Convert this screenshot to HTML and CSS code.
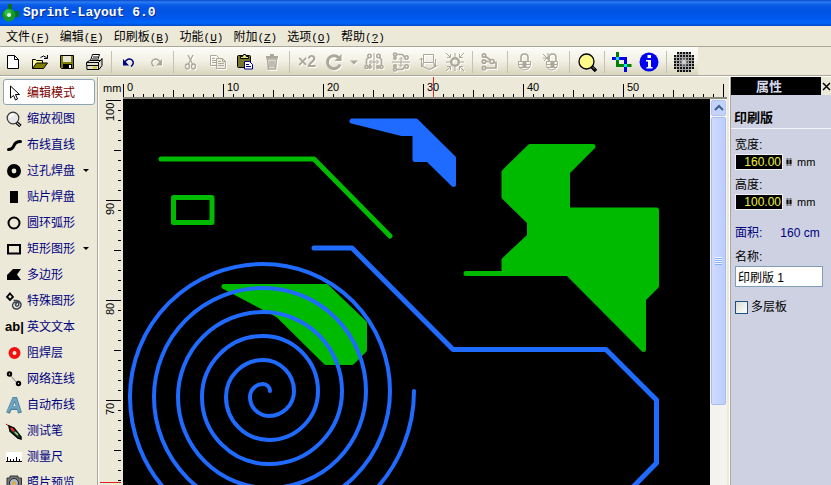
FILE: index.html
```html
<!DOCTYPE html>
<html lang="zh-CN">
<head>
<meta charset="utf-8">
<title>Sprint-Layout 6.0</title>
<link rel="stylesheet" href="styles.css">
</head>
<body>
<div class="app">
  <header class="titlebar">
    <svg class="logo" width="20" height="20" viewBox="0 0 20 20"><path d="M8 1h4v6h-4zM13 8h6v6h-6zM2 9h4v5h-4z" fill="#0a6e1c"/><circle cx="9" cy="12" r="6.5" fill="#139a2a"/><circle cx="8" cy="10" r="3.5" fill="#2fc048"/><circle cx="9" cy="12" r="2" fill="#e6f4e6"/></svg>
    <h1>Sprint-Layout 6.0</h1>
  </header>

  <nav class="menubar">
    <button>文件<span>(<u>F</u>)</span></button>
    <button>编辑<span>(<u>E</u>)</span></button>
    <button>印刷板<span>(<u>B</u>)</span></button>
    <button>功能<span>(<u>U</u>)</span></button>
    <button>附加<span>(<u>Z</u>)</span></button>
    <button>选项<span>(<u>O</u>)</span></button>
    <button>帮助<span>(<u>?</u>)</span></button>
  </nav>

  <div class="toolrow">
  <div class="toolbar" role="toolbar">
    <button aria-label="新建"><svg viewBox="0 0 20 20"><path d="M4.500 3.500h7l4 4v9h-11z" fill="#fff" stroke="#000"/><path d="M11.500 3.500v4h4" fill="none" stroke="#000"/></svg></button>
    <button aria-label="打开"><svg viewBox="0 0 20 20"><path d="M2.500 16.500v-9h3l1 1h6v3" fill="#ffff8c" stroke="#000"/><path d="M2.500 16.500l4-5.500h11l-4 5.500z" fill="#808000" stroke="#000"/><path d="M10.500 5.500q3-3 6 0M17.500 3v3.500h-3.500" fill="none" stroke="#000"/></svg></button>
    <button aria-label="保存"><svg viewBox="0 0 20 20"><path d="M3.500 3.500h13v13h-12l-1-1z" fill="#808000" stroke="#000"/><path d="M6 4h8v6h-8z" fill="#e8e6d8"/><path d="M6 12h9v4h-9z" fill="#000"/><path d="M12 13h2v3h-2z" fill="#fff"/></svg></button>
    <button aria-label="打印"><svg viewBox="0 0 20 20"><path d="M6.500 8.500l2-6h7l-2 6z" fill="#fff" stroke="#000"/><path d="M9 5h5M8 7h5" stroke="#000"/><path d="M2.500 10.500l3-2h11l1.500-2v7l-3 4h-12z" fill="#deddd0" stroke="#000"/><path d="M2.500 10.500h12v7M14.500 10.500l3-3M3 13.500h12" fill="none" stroke="#000"/><path d="M9 14.500h4v2h-4z" fill="#d0c800"/></svg></button>
    <i class="sep"></i>
    <button aria-label="撤销"><svg viewBox="0 0 20 20"><path d="M5 11q4-6 8-3 3 3-1 6.500" fill="none" stroke="#000080" stroke-width="1.500"/><path d="M4 7v6.500h6z" fill="#000080"/></svg></button>
    <button aria-label="重做" disabled><svg viewBox="0 0 20 20"><path d="M15 11q-4-6-8-3-3 3 1 6.500" fill="none" stroke="currentColor" stroke-width="1.500"/><path d="M16 7v6.500h-6z" fill="currentColor"/></svg></button>
    <i class="sep"></i>
    <button aria-label="剪切" disabled><svg viewBox="0 0 20 20" fill="none" stroke="currentColor" stroke-width="1.300"><path d="M7 3l4.500 9M12 3l-4.500 9"/><ellipse cx="6.500" cy="14.500" rx="2" ry="2.500"/><ellipse cx="12.500" cy="14.500" rx="2" ry="2.500"/></svg></button>
    <button aria-label="复制" disabled><svg viewBox="0 0 20 20" fill="none" stroke="currentColor"><path d="M2.500 3.500h6l2 2v8h-8zM4 6.500h3M4 8.500h4M4 10.500h4"/><path d="M8.500 6.500h6l3 3v7h-9z" fill="#efede0"/><path d="M10 9.500h3M10 11.500h6M10 13.500h6M14.500 6.500v3h3"/></svg></button>
    <button aria-label="粘贴"><svg viewBox="0 0 20 20"><rect x="2.500" y="3.500" width="13" height="12" rx="1" fill="#77752e" stroke="#000"/><path d="M5.500 6.500v-2h2l1-2h2l1 2h2v2z" fill="#e8e480" stroke="#000"/><path d="M9.500 9.500h5l3 3v4.500h-8z" fill="#fff" stroke="#000080"/><path d="M11 12.500h3M11 14.500h5" stroke="#000080"/></svg></button>
    <button aria-label="删除" disabled><svg viewBox="0 0 20 20"><path d="M4 4h4v-2h4v2h4v2.500h-12z" fill="currentColor"/><path d="M5.500 7h9l-1 10h-7zM8 8.500v7M10 8.500v7M12 8.500v7" fill="none" stroke="currentColor" stroke-width="1.500"/></svg></button>
    <i class="sep"></i>
    <button disabled class="dup">×2</button>
    <button aria-label="旋转" disabled><svg viewBox="0 0 20 20"><path d="M16 12.500a6.500 6.500 0 1 1-1.500-7" fill="none" stroke="currentColor" stroke-width="3"/><path d="M17.500 2v7h-7z" fill="currentColor"/></svg></button>
    <button aria-label="旋转角度" disabled class="drop"><svg viewBox="0 0 12 20"><path d="M2 8.500h8l-4 4z" fill="currentColor"/></svg></button>
    <button aria-label="水平镜像" disabled><svg viewBox="0 0 20 20" fill="none" stroke="currentColor"><path d="M10 1v17" /><path d="M6 10h8M7.500 8l-2 2 2 2M12.500 8l2 2-2 2"/><g stroke-width="1.600"><circle cx="5.500" cy="4" r="1.700"/><path d="M4.500 5.500l-2 2v6"/><circle cx="2.500" cy="15" r="1.500"/><path d="M6 12v2"/><circle cx="6" cy="15" r="1.200"/><circle cx="14.500" cy="4" r="1.700"/><path d="M15.500 5.500l2 2v6"/><circle cx="17.500" cy="15" r="1.500"/><circle cx="14" cy="15" r="1.200"/></g></svg></button>
    <button aria-label="垂直镜像" disabled><svg viewBox="0 0 20 20" fill="none" stroke="currentColor"><path d="M1 10h18M10 6v8M8 7.500l2-2 2 2M8 12.500l2 2 2-2"/><g stroke-width="1.600"><circle cx="4" cy="2.500" r="1.500"/><path d="M5.500 2.500h6l2 2.500"/><circle cx="15.500" cy="5.500" r="1.700"/><circle cx="4" cy="6" r="1.200"/><circle cx="4" cy="17.500" r="1.500"/><path d="M5.500 17.500h6l2-2.500"/><circle cx="15.500" cy="14.500" r="1.700"/><circle cx="4" cy="14" r="1.200"/></g></svg></button>
    <button aria-label="对齐" disabled><svg viewBox="0 0 20 20" fill="none" stroke="currentColor"><path d="M5.500 2.500h10v8h-10zM3.500 15V6M1.500 8l2-2 2 2M17.500 7v8M15.500 13l2 2 2-2"/><path d="M5.500 10.500l-1 4 7 3 6-3-2-4" stroke-width="1.200"/></svg></button>
    <button aria-label="吸附" disabled><svg viewBox="0 0 20 20" fill="none" stroke="currentColor"><circle cx="10" cy="10" r="3.800" stroke-width="2.400"/><path d="M1 10h4M15 10h4M10 1v4M10 15v4M1 1l4.500 4.500M5.500 2v3.500h-3.500M19 1l-4.500 4.500M14.500 2v3.500h3.500M1 19l4.500-4.500M2 14.500h3.500v3.500M19 19l-4.500-4.500M18 14.500h-3.500v3.500"/></svg></button>
    <i class="sep"></i>
    <button aria-label="连接" disabled><svg viewBox="0 0 20 20" fill="none" stroke="currentColor" stroke-width="1.700"><circle cx="4" cy="3.500" r="1.700"/><circle cx="4" cy="9.500" r="1.700"/><circle cx="4" cy="16" r="1.700"/><path d="M5.500 4.500l5 3.500M6 16h10v-5.500h-2M6 9.500h3"/><circle cx="12" cy="9.500" r="2"/></svg></button>
    <i class="sep"></i>
    <button aria-label="锁定" disabled><svg viewBox="0 0 20 20" fill="none" stroke="currentColor"><path d="M6 9V5q0-3 3.500-3t3.500 3v4" stroke-width="1.600"/><path d="M3.500 9.500h12v4q-1 4-6 4.500-5-.5-6-4.500zM3 12.500h13M4 15.500h11"/><path d="M8 10h3v5h-3z" fill="currentColor"/></svg></button>
    <button aria-label="解锁" disabled><svg viewBox="0 0 20 20" fill="none" stroke="currentColor"><path d="M7 9V6q0-4 3.500-4t3.500 3v4" stroke-width="1.600"/><path d="M4.500 9.500h11v4q-1 4-5.500 4.500-5-.5-5.500-4.500zM4 12.500h12M5 15.500h10M1 2l7 7M6 1v7M1 6h7M8 3l-6 6"/><path d="M9 10h3v5h-3z" fill="currentColor"/></svg></button>
    <i class="sep"></i>
    <button aria-label="缩放"><svg viewBox="0 0 20 20"><path d="M14 14l5 5" stroke="#000" stroke-width="3.500"/><path d="M15.500 15l3 3" stroke="#ddd" stroke-dasharray="1 1"/><circle cx="9.500" cy="9.500" r="7.500" fill="#fff98a" stroke="#000" stroke-width="1.300"/></svg></button>
    <i class="sep"></i>
    <button aria-label="自动布线"><svg viewBox="0 0 20 20" fill="none" stroke-width="3"><path d="M5.500 0v13.500h14" stroke="#008000"/><path d="M0 6.500h13.500v13.500" stroke="#0000e8"/><path d="M4 5h3v3h-3zM12 12h3v3h-3z" fill="#00e8ff"/></svg></button>
    <button aria-label="信息"><svg viewBox="0 0 20 20"><circle cx="10" cy="10" r="9.500" fill="#0000f0"/><path d="M8.500 3h3.500v3h-3.500zM7 8h5v7h1.500v1.500h-6v-1.500h1.500v-5.500h-2z" fill="#fff"/></svg></button>
    <i class="sep"></i>
    <button aria-label="栅格"><svg viewBox="0 0 20 20"><defs><pattern id="dots" width="3" height="3" patternUnits="userSpaceOnUse"><path d="M0 0h2v2h-2z" fill="#111"/></pattern><radialGradient id="glow"><stop offset="0" stop-color="#fff"/><stop offset=".4" stop-color="#bbb" stop-opacity=".7"/><stop offset="1" stop-color="#777" stop-opacity="0"/></radialGradient></defs><path d="M3 0h14v3h3v14h-3v3h-14v-3h-3v-14h3z" fill="#aaa"/><path d="M3 0h14v3h3v14h-3v3h-14v-3h-3v-14h3z" fill="url(#dots)"/><circle cx="10" cy="10" r="6" fill="url(#glow)"/></svg></button>
  </div>
  </div>

  <main class="workspace">
    <aside class="tools">
      <button class="tool active"><svg viewBox="0 0 18 18"><path d="M5.500 2v12l3-2.500 2 4.500 2-1-2-4.500h4z" fill="#fff" stroke="#000"/></svg>编辑模式</button>
      <button class="tool"><svg viewBox="0 0 18 18"><path d="M11 12l4.500 4" stroke="#111" stroke-width="3.500"/><path d="M12 13l3 2.500" stroke="#ddd"/><circle cx="8" cy="8" r="5.800" fill="#e8e8e8" stroke="#333" stroke-width="1.200"/><path d="M5 8q0-4 4-3" fill="none" stroke="#fff" stroke-width="2"/></svg>缩放视图</button>
      <button class="tool"><svg viewBox="0 0 18 18"><path d="M3.500 13.500q4 0 5.500-4t6.500-4" fill="none" stroke="#000" stroke-width="3" stroke-linecap="round"/></svg>布线直线</button>
      <button class="tool"><svg viewBox="0 0 18 18"><circle cx="9" cy="9" r="4.700" fill="none" stroke="#000" stroke-width="4.600"/></svg>过孔焊盘<b class="caret"></b></button>
      <button class="tool"><svg viewBox="0 0 18 18"><path d="M5 3h8v12h-8z"/></svg>贴片焊盘</button>
      <button class="tool"><svg viewBox="0 0 18 18"><circle cx="9" cy="9" r="5.500" fill="none" stroke="#000" stroke-width="2"/></svg>圆环弧形</button>
      <button class="tool"><svg viewBox="0 0 18 18"><path d="M3 5h12v8.500h-12z" fill="none" stroke="#000" stroke-width="2"/></svg>矩形图形<b class="caret"></b></button>
      <button class="tool"><svg viewBox="0 0 18 18"><path d="M2 9l6-6h8l-4 5.500 4 5.500h-14z"/></svg>多边形</button>
      <button class="tool"><svg viewBox="0 0 18 18" fill="none"><path d="M5 1.500l3 3.500-3 3-3-3z" stroke="#000" stroke-width="1.800"/><path d="M12 12q-2-1-1.500 1 1 2.500 3 .5 1-3-2-3.500-4 0-4 4 1 3.500 5 3 4-1.500 3.500-5-1-3-4.500-3.500h-3" stroke="#3c4653" stroke-width="1.400"/></svg>特殊图形</button>
      <button class="tool"><span class="glyph">ab|</span>英文文本</button>
      <button class="tool"><svg viewBox="0 0 18 18"><circle cx="9.500" cy="9" r="4" fill="none" stroke="#f01010" stroke-width="4"/></svg>阻焊层</button>
      <button class="tool"><svg viewBox="0 0 18 18"><path d="M5 5l8 9" stroke="#777"/><g fill="none" stroke="#000" stroke-width="2"><circle cx="4.500" cy="4" r="1.700"/><circle cx="13.500" cy="13.500" r="1.700"/></g></svg>网络连线</button>
      <button class="tool"><svg viewBox="0 0 18 18" fill="none"><path d="M3 17l6-14h1.500l4.500 14M6 12h7" stroke="#4d7a96" stroke-width="4"/><path d="M3 16l6-13h1.500l4 13M6 11.500h7" stroke="#6da4c4" stroke-width="2.600"/></svg>自动布线</button>
      <button class="tool"><svg viewBox="0 0 18 18"><path d="M1 2l4 3" stroke="#a00"/><path d="M4 4l5 2 7 9v2l-3-1-8-7z" stroke="#000" fill="#264c2c" stroke-width="1.500"/><path d="M6 6l3 3" stroke="#f22" stroke-width="2"/><path d="M10 10l3 3" stroke="#8fd89a" stroke-width="1.500"/></svg>测试笔</button>
      <button class="tool"><svg viewBox="0 0 18 18"><path d="M1 4h16v10h-16z" fill="#fff"/><path d="M1 13.500h16M2.500 9v5M5.500 11v3M8.500 11v3M11.500 9v5M14.500 11v3" stroke="#000"/></svg>测量尺</button>
      <button class="tool"><svg viewBox="0 0 18 18"><path d="M2 4h3v-2h8v2h3.500v12h-14.500z" fill="#777" stroke="#333"/><circle cx="9" cy="9" r="4.500" fill="#aeb9cc" stroke="#222"/><circle cx="9" cy="9" r="2" fill="#d6ad45"/></svg>照片预览</button>
    </aside>

    <section class="board">
      <div class="unit">mm</div>
      <svg class="hruler" width="100%" height="22">
        <defs><pattern id="hticks" width="100" height="22" patternUnits="userSpaceOnUse"><path d="M.5 7v13M10.500 17v3M20.500 17v3M30.500 17v3M40.500 17v3M50.500 13v7M60.500 17v3M70.500 17v3M80.500 17v3M90.500 17v3" stroke="#000"/></pattern></defs>
        <rect width="100%" height="22" fill="url(#hticks)"/>
        <text x="4" y="14">0</text><text x="104" y="14">10</text><text x="204" y="14">20</text><text x="304" y="14">30</text><text x="404" y="14">40</text><text x="504" y="14">50</text>
        <path d="M310.500 0v20" stroke="#e02020"/>
      </svg>
      <svg class="vruler" width="22" height="100%">
        <defs><pattern id="vticks" y="1" width="22" height="100" patternUnits="userSpaceOnUse"><path d="M7 .5h15M19 10.500h3M19 20.500h3M19 30.500h3M19 40.500h3M15 50.500h7M19 60.500h3M19 70.500h3M19 80.500h3M19 90.500h3" stroke="#000"/></pattern></defs>
        <rect width="22" height="100%" fill="url(#vticks)"/>
        <text transform="translate(15 22) rotate(-90)">100</text><text transform="translate(15 116) rotate(-90)">90</text><text transform="translate(15 216) rotate(-90)">80</text><text transform="translate(15 316) rotate(-90)">70</text>
        <path d="M1 383.500h21" stroke="#e02020"/>
      </svg>
      <svg class="canvas" width="100%" height="100%">
        <g transform="translate(-123 -99)" stroke-width="5" stroke-linecap="round" stroke-linejoin="round">
          <g fill="none" stroke="#00ba00">
            <path d="M161 159H314L390 236"/>
            <path d="M173.500 197.500h38.500v25h-38.500z"/>
          </g>
          <g fill="#00ba00" stroke="#00ba00">
            <path d="M224 286.500H326.500L364.500 323V350L352 362.500H326L278 315Z"/>
            <path d="M530 146.500H593L567.500 172V210H656.500V286L643.500 299V349.500L568 273.500H466H504V260L529.500 236V222L504 197V172Z"/>
          </g>
          <path d="M352 121H416L453.500 158V184.500L428 159.500H415V133.500H402Z" fill="#1f6bff" stroke="#1f6bff"/>
          <g fill="none" stroke="#1f6bff">
            <path d="M314 248H352L453 349.500H606L656.500 400V463L630 490"/>
            <path stroke-width="4" d="M270 391A7 7 0 0 0 263 384A13 13 0 0 0 250 397A19 19 0 0 0 269 416A25 25 0 0 0 294 391A31 31 0 0 0 263 360A37 37 0 0 0 226 397A43 43 0 0 0 269 440A49 49 0 0 0 318 391A55 55 0 0 0 263 336A61 61 0 0 0 202 397A67 67 0 0 0 269 464A73 73 0 0 0 342 391A79 79 0 0 0 263 312A85 85 0 0 0 178 397A91 91 0 0 0 269 488A97 97 0 0 0 366 391A103 103 0 0 0 263 288A109 109 0 0 0 154 397A115 115 0 0 0 269 512A121 121 0 0 0 390 391A127 127 0 0 0 263 264A133 133 0 0 0 130 397A139 139 0 0 0 269 536A145 145 0 0 0 414 391"/>
          </g>
        </g>
      </svg>
      <div class="scroll">
        <button aria-label="向上滚动"><svg width="10" height="8" viewBox="0 0 10 8"><path d="M1 6l4-4 4 4" fill="none" stroke="#40608c" stroke-width="2"/></svg></button>
        <div class="thumb"><i></i></div>
      </div>
    </section>

    <aside class="props">
      <div class="props-head"><h2>属性</h2><button aria-label="关闭"><svg width="9" height="9" viewBox="0 0 9 9"><path d="M1 1l7 7M8 1l-7 7" stroke="#000" stroke-width="1.500"/></svg></button></div>
      <h3>印刷版</h3>
      <form class="fields">
        <div class="field"><label for="w">宽度:</label><div class="measure"><input id="w" value="160.00"><svg width="6" height="10" viewBox="0 0 6 10"><path d="M1.500 1v8M4.500 1v8" stroke="#777" stroke-width="2"/><path d="M1.500 3v4M4.500 3v4" stroke="#111" stroke-width="2"/></svg><span>mm</span></div></div>
        <div class="field"><label for="h">高度:</label><div class="measure"><input id="h" value="100.00"><svg width="6" height="10" viewBox="0 0 6 10"><path d="M1.500 1v8M4.500 1v8" stroke="#777" stroke-width="2"/><path d="M1.500 3v4M4.500 3v4" stroke="#111" stroke-width="2"/></svg><span>mm</span></div></div>
        <div class="area"><span>面积:</span><span>160 cm</span></div>
        <div class="field"><label for="n">名称:</label><input id="n" class="name" value="印刷版 1"></div>
        <label class="check"><input type="checkbox">多层板</label>
      </form>
    </aside>
  </main>
</div>
</body>
</html>
```
FILE: styles.css
```css
* { box-sizing: border-box; }
body {
  margin: 0;
  font: 12px/16px "Liberation Sans", "Noto Sans CJK SC", sans-serif;
  color: #000;
  background: #ece9d8;
  overflow: hidden;
}
button {
  margin: 0;
  padding: 0;
  border: 0;
  background: none;
  font: inherit;
  color: inherit;
}
h1, h2, h3 { margin: 0; font-size: 12px; }
.app { display: flex; flex-direction: column; height: 100vh; }

.titlebar {
  flex: none;
  display: flex;
  align-items: center;
  gap: 3px;
  height: 26px;
  background: linear-gradient(#0a48c8 0, #2a7cf4 2px, #0a5ce8 5px, #0054e3 10px, #0058ee 18px, #0066fa 23px, #0048c4 26px);
}
.titlebar h1 {
  font: bold 13px/20px "Liberation Mono", monospace;
  color: #fff;
  text-shadow: 1px 1px 0 #0a2a80;
}

.menubar { flex: none; display: flex; gap: 10px; height: 20px; padding: 2px 0 0 6px; }
.menubar button { white-space: nowrap; line-height: 18px; }
.menubar span { font: 11px/18px "Liberation Mono", monospace; }

.toolrow {
  flex: none;
  display: flex;
  height: 30px;
  border-top: 1px solid #aca899;
  border-bottom: 1px solid #aca899;
}
.toolbar {
  display: flex;
  gap: 1px;
  align-items: center;
  padding: 2px 1px 0 0;
  background: linear-gradient(#fdfdfa, #f2f0e4 50%, #d8d4bc);
}
.toolbar button {
  display: grid;
  place-items: center;
  flex: none;
  width: 26px;
  height: 26px;
}
.toolbar svg { width: 20px; height: 20px; }
.toolbar .drop { width: 12px; }
.toolbar .drop svg { width: 12px; }
.toolbar button:disabled { color: #aca899; filter: drop-shadow(1px 1px 0 #fff); }
.toolbar .dup { font: bold 16px/20px "Liberation Sans", sans-serif; }
.sep { width: 7px; height: 22px; background: linear-gradient(90deg, transparent 3px, #c5c2b0 3px, #c5c2b0 4px, transparent 4px); }

.workspace {
  flex: 1;
  min-height: 0;
  display: grid;
  grid-template-columns: 98px 1fr 105px;
  border-top: 1px solid #fff;
}
.tools {
  overflow: hidden;
  padding: 2px 2px 0 3px;
  border-right: 1px solid #aca899;
}
.tool {
  display: flex;
  align-items: center;
  gap: 4px;
  width: 100%;
  height: 26px;
  padding: 1px 0 0 1px;
  border: 1px solid transparent;
  border-radius: 3px;
  color: #000080;
  white-space: nowrap;
}
.tool svg, .glyph { flex: none; width: 18px; height: 18px; }
.glyph { font: bold 13px/18px "Liberation Sans", sans-serif; color: #000; }
.tool.active { background: #fff; border-color: #8ba5b5; color: #800000; }
.caret { margin-left: 4px; border: 3px solid transparent; border-top-color: #000; border-bottom: 0; }

.board {
  min-width: 0;
  min-height: 0;
  display: grid;
  grid-template: 22px 1fr / 24px 1fr 17px;
  border-left: 1px solid #fff;
}
.unit { padding: 3px 0 0 4px; font-size: 11px; }
.hruler { grid-column: 2 / 4; display: block; border-bottom: 2px solid #8a887c; }
.hruler, .vruler { font: 11px "Liberation Sans", sans-serif; }
.vruler { display: block; }
.canvas { display: block; background: #000; }
.scroll { display: flex; flex-direction: column; gap: 1px; padding: 1px; background: #f4f3ee; }
.scroll button {
  display: grid;
  place-items: center;
  height: 16px;
  border: 1px solid #b0c4f4;
  border-radius: 2px;
  background: #c3d3fd;
}
.thumb {
  display: grid;
  place-items: center;
  height: 75%;
  border: 1px solid #a8bcf0;
  border-radius: 2px;
  background: linear-gradient(90deg, #d0dcff, #bccdfb);
}
.thumb i { width: 7px; height: 8px; background: repeating-linear-gradient(#eef4fe 0, #eef4fe 1px, #8cb0f8 1px, #8cb0f8 2px); }
.board { margin-right: -1px; }

.props { margin: 0 0 0 5px; background: #ced1e2; box-shadow: -1px 0 0 #aca899, -2px 0 0 #fff; overflow: hidden; }
.props-head { display: flex; height: 18px; background: #000; }
.props-head h2 { flex: 1; padding-right: 14px; text-align: center; color: #d4d8ea; font-size: 13px; line-height: 19px; }
.props-head button { display: grid; place-items: center; width: 10px; background: #ece9d8; overflow: hidden; }
.props h3 { padding: 15px 3px 2px; border-bottom: 1px solid #f4f5fa; font-size: 13px; line-height: 16px; }
.fields { display: flex; flex-direction: column; padding: 8px 8px 0 4px; }
.field { display: flex; flex-direction: column; gap: 1px; margin-bottom: 7px; }
.measure { display: flex; align-items: center; gap: 3px; height: 16px; }
.measure input {
  width: 48px;
  height: 16px;
  padding: 0 1px;
  border: 1px solid #f0f0f4;
  background: #000;
  color: #f0f03c;
  font: 12px/14px "Liberation Sans", sans-serif;
  text-align: right;
}
.measure span { margin-left: 2px; font-size: 11px; }
.area { display: flex; gap: 18px; margin: 8px 0; color: #000080; white-space: nowrap; }
.name {
  width: 100%;
  height: 21px;
  padding: 0 2px;
  border: 1px solid #7f9db9;
  background: #fff;
  font: inherit;
}
.check { display: flex; align-items: center; gap: 3px; margin-top: 5px; }
.check input {
  appearance: none;
  width: 13px;
  height: 13px;
  margin: 0;
  border: 1px solid #1c5180;
  background: linear-gradient(135deg, #dcdcd7, #fff);
}
```
